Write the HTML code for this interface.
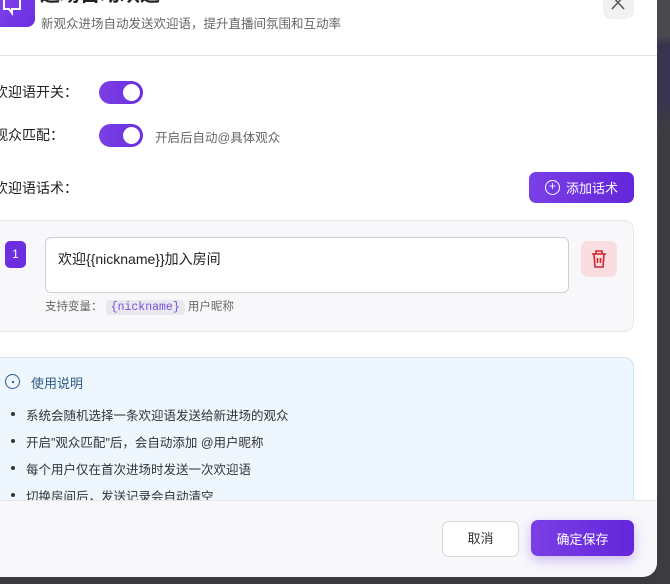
<!DOCTYPE html>
<html><head><meta charset="utf-8"><style>
*{box-sizing:border-box;margin:0;padding:0}
body{width:670px;height:584px;background:#3b3b3d;font-family:"Liberation Sans","Noto Sans CJK SC",sans-serif;position:relative;overflow:hidden}
.bgr{position:absolute;left:657px;top:0;width:13px;height:584px;background:linear-gradient(#4a4a4e 0,#4a4a4e 35px,#3a3350 45px,#3a3350 100px,#3c3c40 130px)}
.modal{position:absolute;left:-20px;top:-40px;width:677px;height:616px;background:#fff;border-radius:0 0 14px 0;overflow:hidden}
.a{position:absolute}
.lbl{font-size:14px;color:#222;left:-6px}
.tog{width:44px;height:23px;border-radius:12px;background:linear-gradient(90deg,#7b3fe4,#6a2ee0);left:99px}
.tog::after{content:"";position:absolute;right:3px;top:3px;width:17px;height:17px;border-radius:50%;background:#fff}
.btnp{background:linear-gradient(90deg,#7a3fe6,#6426d9);color:#fff;border-radius:7px;font-size:13px;display:flex;align-items:center;justify-content:center}
li{list-style:none;position:absolute;left:26px;font-size:12.5px;color:#333}
li::before{content:"";position:absolute;left:-15px;top:7px;width:4px;height:4px;border-radius:50%;background:#333}
</style></head><body>
<div class="bgr"></div>
<div class="modal"></div>
<div class="a" style="left:-10px;top:-20px;width:45px;height:47px;border-radius:8px;background:linear-gradient(135deg,#8a4af0,#6a2ee0)"></div>
<svg class="a" style="left:2px;top:0" width="20" height="16" viewBox="0 0 20 16"><path d="M2 0v9h5l3 4v-4h8V0" fill="none" stroke="#fff" stroke-width="2"/></svg>
<div class="a" style="left:40px;top:-22px;font-size:20px;font-weight:bold;color:#222">进场自动欢迎</div>
<div class="a" style="left:41px;top:13px;font-size:12.5px;color:#666">新观众进场自动发送欢迎语，提升直播间氛围和互动率</div>
<div class="a" style="left:603px;top:-20px;width:31px;height:39px;border-radius:8px;background:#f1f1f3"></div>
<svg class="a" style="left:611px;top:0" width="14" height="10" viewBox="0 0 14 10"><path d="M1 -4L13 9M13 -4L1 9" stroke="#555" stroke-width="1.5"/></svg>
<div class="a" style="left:0;top:55px;width:657px;height:1px;background:#e2e2e6"></div>
<div class="a lbl" style="top:82px">欢迎语开关：</div>
<div class="a tog" style="top:81px"></div>
<div class="a lbl" style="top:125px">观众匹配：</div>
<div class="a tog" style="top:124px"></div>
<div class="a" style="left:155px;top:127px;font-size:12.5px;color:#666">开启后自动@具体观众</div>
<div class="a lbl" style="top:178px">欢迎语话术：</div>
<div class="a btnp" style="left:529px;top:172px;width:105px;height:31px"><span style="display:inline-block;width:15px;height:15px;border:1.5px solid #fff;border-radius:50%;margin-right:6px;font-size:12px;line-height:11px;text-align:center">+</span>添加话术</div>
<div class="a" style="left:-10px;top:220px;width:644px;height:112px;background:#f8f8fb;border:1px solid #e6e6ec;border-radius:10px"></div>
<div class="a" style="left:5px;top:241px;width:21px;height:27px;border-radius:5px;background:#6c2ee0;color:#fff;font-size:12px;text-align:center;line-height:27px">1</div>
<div class="a" style="left:45px;top:237px;width:524px;height:56px;background:#fff;border:1px solid #cfcfd6;border-radius:6px;padding:11px 12px;font-size:14px;color:#222">欢迎{{nickname}}加入房间</div>
<div class="a" style="left:581px;top:241px;width:36px;height:36px;border-radius:7px;background:#fadde0"></div>
<svg class="a" style="left:590px;top:249px" width="18" height="20" viewBox="0 0 18 20"><path d="M2 5h14M6 5V2h6v3M4 5l1 13h8l1-13M7.5 9v5M10.5 9v5" fill="none" stroke="#d0242e" stroke-width="1.6"/></svg>
<div class="a" style="left:45px;top:298px;font-size:11.5px;color:#666;line-height:18px">支持变量： <span style="background:#e8e8ee;border-radius:4px;padding:1px 5px;color:#7a4fd8;font-family:'Liberation Mono',monospace">{nickname}</span> 用户昵称</div>
<div class="a" style="left:-10px;top:357px;width:644px;height:160px;background:#eff7fe;border:1px solid #cfe4f4;border-radius:10px"></div>
<div class="a" style="left:5px;top:374px;width:15px;height:15px;border:1.5px solid #2c5a86;border-radius:50%"></div>
<div class="a" style="left:12px;top:381px;width:2px;height:2px;background:#2c5a86"></div>
<div class="a" style="left:31px;top:373px;font-size:13px;color:#2c5a86">使用说明</div>
<ul>
<li style="top:405px">系统会随机选择一条欢迎语发送给新进场的观众</li>
<li style="top:432px">开启"观众匹配"后，会自动添加 @用户昵称</li>
<li style="top:459px">每个用户仅在首次进场时发送一次欢迎语</li>
<li style="top:486px">切换房间后，发送记录会自动清空</li>
</ul>
<div class="a" style="left:0;top:500px;width:657px;height:77px;background:#f8f8fb;border-top:1px solid #e6e6ec;border-radius:0 0 14px 0"></div>
<div class="a" style="left:442px;top:521px;width:77px;height:36px;border:1px solid #d6d6dc;border-radius:7px;background:#fff;font-size:13px;color:#333;text-align:center;line-height:34px">取消</div>
<div class="a btnp" style="left:531px;top:520px;width:103px;height:36px;box-shadow:0 4px 12px rgba(120,60,230,.35)">确定保存</div>
</body></html>
